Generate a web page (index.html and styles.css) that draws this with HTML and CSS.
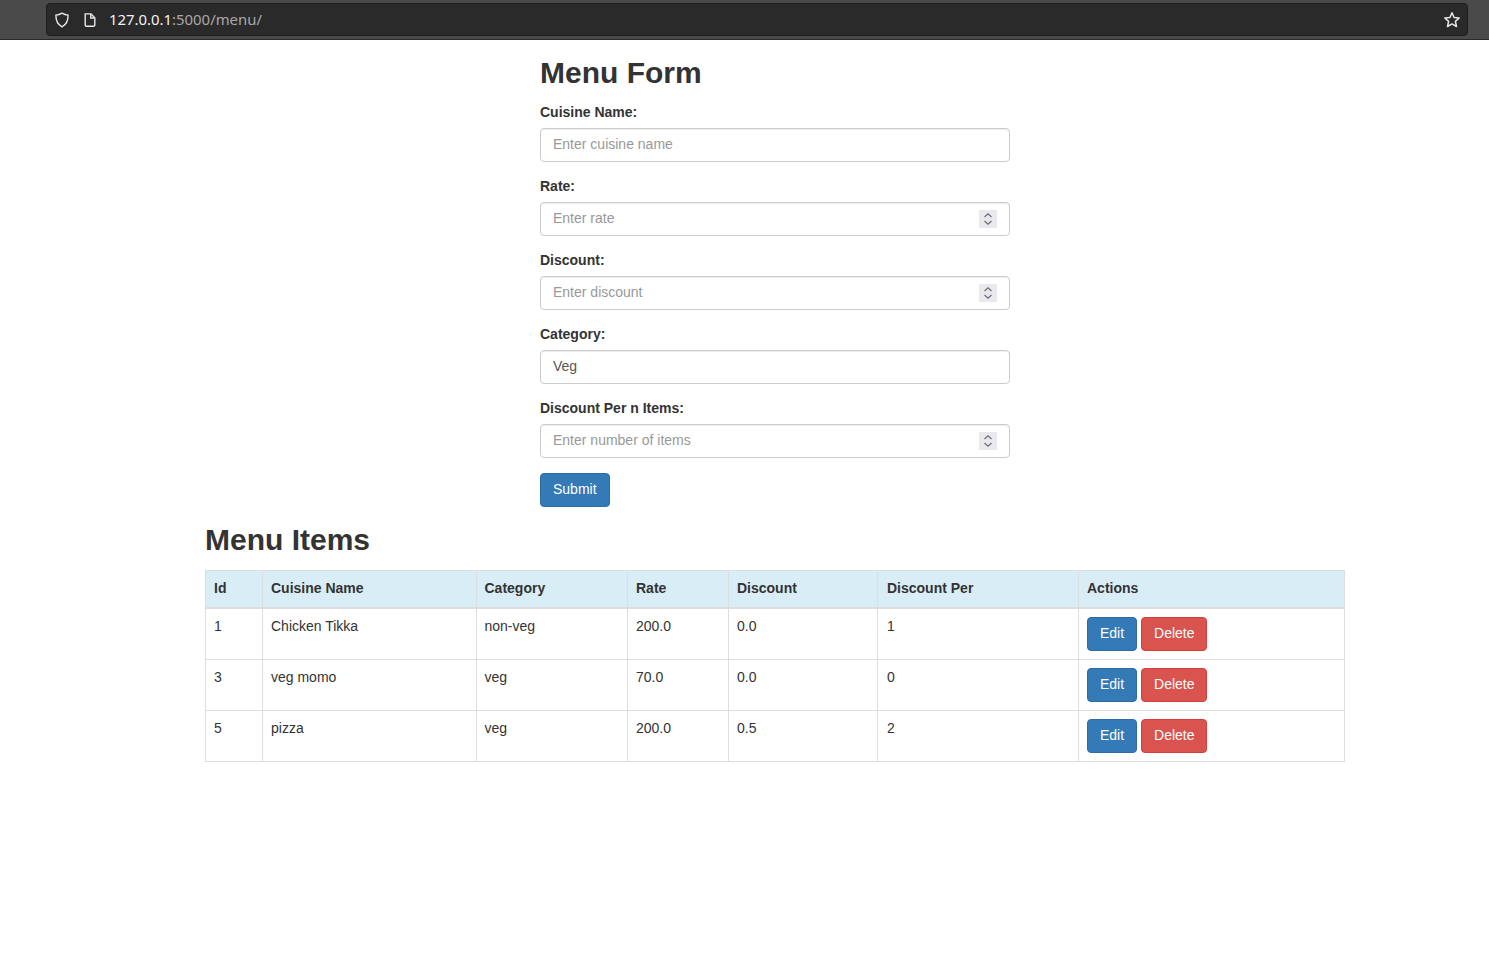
FILE: index.html
```html
<!DOCTYPE html>
<html>
<head>
  <meta charset="UTF-8">
  <title>Menu</title>
  <link rel="stylesheet" href="styles.css">
</head>
<body>
  <!-- Browser toolbar -->
  <div class="browser-bar">
    <div class="url-field">
      <svg class="url-icon" width="16" height="16" viewBox="0 0 16 16" fill="none" stroke="#e8e8e8" stroke-width="1.4"><path d="M8 1.2 C6 2.4 4 3 1.9 3.1 C1.8 8.4 3.6 12.6 8 14.9 C12.4 12.6 14.2 8.4 14.1 3.1 C12 3 10 2.4 8 1.2 Z"/></svg>
      <svg class="url-icon page-icon" width="16" height="16" viewBox="0 0 16 16" fill="none" stroke="#e8e8e8" stroke-width="1.4"><path d="M3.2 1.9 H9 L12.8 5.7 V13 A1.2 1.2 0 0 1 11.6 14.2 H4.4 A1.2 1.2 0 0 1 3.2 13 Z"/><path d="M8.8 2 V6 H12.8"/></svg>
      <span class="url-text"><span class="url-host">127.0.0.1</span>:5000/menu/</span>
      <svg class="star-icon" width="18" height="18" viewBox="0 0 18 18" fill="none" stroke="#e8e8e8" stroke-width="1.5" stroke-linejoin="round"><path d="M9 1.8 L11.1 6.5 L16.2 7 L12.4 10.4 L13.5 15.5 L9 12.9 L4.5 15.5 L5.6 10.4 L1.8 7 L6.9 6.5 Z"/></svg>
    </div>
  </div>

  <div class="page">
    <!-- Menu form -->
    <div class="form-wrap">
      <h1 class="form-title">Menu Form</h1>
      <form>
        <div class="form-group">
          <label>Cuisine Name:</label>
          <input class="form-control" type="text" placeholder="Enter cuisine name">
        </div>
        <div class="form-group">
          <label>Rate:</label>
          <div class="number-box">
            <input class="form-control" type="text" placeholder="Enter rate">
            <svg class="spinner" width="18" height="18" viewBox="0 0 18 18" fill="none" stroke="#6b6b75" stroke-width="1.2"><path d="M5.5 7 L9 3.8 L12.5 7"/><path d="M5.5 11 L9 14.2 L12.5 11"/></svg>
          </div>
        </div>
        <div class="form-group">
          <label>Discount:</label>
          <div class="number-box">
            <input class="form-control" type="text" placeholder="Enter discount">
            <svg class="spinner" width="18" height="18" viewBox="0 0 18 18" fill="none" stroke="#6b6b75" stroke-width="1.2"><path d="M5.5 7 L9 3.8 L12.5 7"/><path d="M5.5 11 L9 14.2 L12.5 11"/></svg>
          </div>
        </div>
        <div class="form-group">
          <label>Category:</label>
          <select class="form-control">
            <option>Veg</option>
            <option>Non-Veg</option>
          </select>
        </div>
        <div class="form-group">
          <label>Discount Per n Items:</label>
          <div class="number-box">
            <input class="form-control" type="text" placeholder="Enter number of items">
            <svg class="spinner" width="18" height="18" viewBox="0 0 18 18" fill="none" stroke="#6b6b75" stroke-width="1.2"><path d="M5.5 7 L9 3.8 L12.5 7"/><path d="M5.5 11 L9 14.2 L12.5 11"/></svg>
          </div>
        </div>
        <button class="btn btn-primary btn-submit" type="button">Submit</button>
      </form>
    </div>

    <!-- Menu table -->
    <h1 class="items-title">Menu Items</h1>
    <table class="table">
      <colgroup>
        <col class="col-id">
        <col class="col-name">
        <col class="col-category">
        <col class="col-rate">
        <col class="col-discount">
        <col class="col-per">
        <col>
      </colgroup>
      <thead>
        <tr>
          <th>Id</th>
          <th>Cuisine Name</th>
          <th>Category</th>
          <th>Rate</th>
          <th>Discount</th>
          <th>Discount Per</th>
          <th>Actions</th>
        </tr>
      </thead>
      <tbody>
        <tr>
          <td>1</td>
          <td>Chicken Tikka</td>
          <td>non-veg</td>
          <td>200.0</td>
          <td>0.0</td>
          <td>1</td>
          <td class="actions">
            <button class="btn btn-primary" type="button">Edit</button>
            <button class="btn btn-danger" type="button">Delete</button>
          </td>
        </tr>
        <tr>
          <td>3</td>
          <td>veg momo</td>
          <td>veg</td>
          <td>70.0</td>
          <td>0.0</td>
          <td>0</td>
          <td class="actions">
            <button class="btn btn-primary" type="button">Edit</button>
            <button class="btn btn-danger" type="button">Delete</button>
          </td>
        </tr>
        <tr>
          <td>5</td>
          <td>pizza</td>
          <td>veg</td>
          <td>200.0</td>
          <td>0.5</td>
          <td>2</td>
          <td class="actions">
            <button class="btn btn-primary" type="button">Edit</button>
            <button class="btn btn-danger" type="button">Delete</button>
          </td>
        </tr>
      </tbody>
    </table>
  </div>
</body>
</html>
```

FILE: styles.css
```css
* { box-sizing: border-box; }
body { margin: 0; background: #fff; color: #333; font-family: "Liberation Sans", Arial, sans-serif; font-size: 14px; line-height: 20px; }

.browser-bar { height: 40px; padding: 3px 21px 0 46px; background: #4a4a4a; border-bottom: 1px solid #2a2a2a; }
.url-field { display: flex; align-items: center; height: 33px; padding: 0 6px 0 7px; background: #2a2a2a; border: 1px solid #1e1e1e; border-radius: 4px; }
.url-icon { flex: none; }
.page-icon { margin-left: 12px; }
.url-text { margin-left: 11px; padding-bottom: 2px; color: #a8a8a8; font-family: "Noto Sans", sans-serif; font-size: 14.9px; }
.url-host { color: #f2f2f2; }
.star-icon { flex: none; margin-left: auto; }

.page { width: 1140px; margin-left: 205px; }
.form-wrap { width: 470px; margin: 0 auto; }

h1 { margin: 0; font-size: 30px; line-height: 33px; font-weight: bold; }
.form-title { padding-top: 16px; margin-bottom: 13px; }
.items-title { margin-top: 16px; margin-bottom: 14px; }

.form-group { margin-bottom: 14px; }
label { display: inline-block; margin-bottom: 6px; font-weight: bold; }
.form-control { display: block; width: 100%; height: 34px; padding: 5px 12px 7px; color: #555; background: #fff; border: 1px solid #ccc; border-radius: 4px; font: inherit; box-shadow: inset 0 1px 1px rgba(0,0,0,.075); appearance: none; }
.form-control::placeholder { color: #999; opacity: 1; }
.number-box { position: relative; }
.spinner { position: absolute; top: 8px; right: 13px; background: #e9e9ed; }

.btn { display: inline-block; height: 34px; padding: 5px 12px 7px; border: 1px solid transparent; border-radius: 4px; color: #fff; font: inherit; cursor: pointer; }
.btn-submit { margin-top: 1px; }
.btn-primary { background: #337ab7; border-color: #2e6da4; }
.btn-danger { background: #d9534f; border-color: #d43f3a; }

.table { width: 100%; border-collapse: collapse; table-layout: fixed; }
.table th, .table td { padding: 7px 8px 8px; text-align: left; vertical-align: top; border: 1px solid #ddd; }
.table th { height: 37px; background: #d9edf7; border-bottom-width: 2px; }
.table td.actions { padding-top: 8px; }
.table th:nth-child(3), .table td:nth-child(3) { padding-left: 7.5px; }
.table th:nth-child(6), .table td:nth-child(6) { padding-left: 9px; }
.col-id { width: 57px; }
.col-name { width: 214px; }
.col-category { width: 151px; }
.col-rate { width: 101px; }
.col-discount { width: 149px; }
.col-per { width: 201px; }
```
